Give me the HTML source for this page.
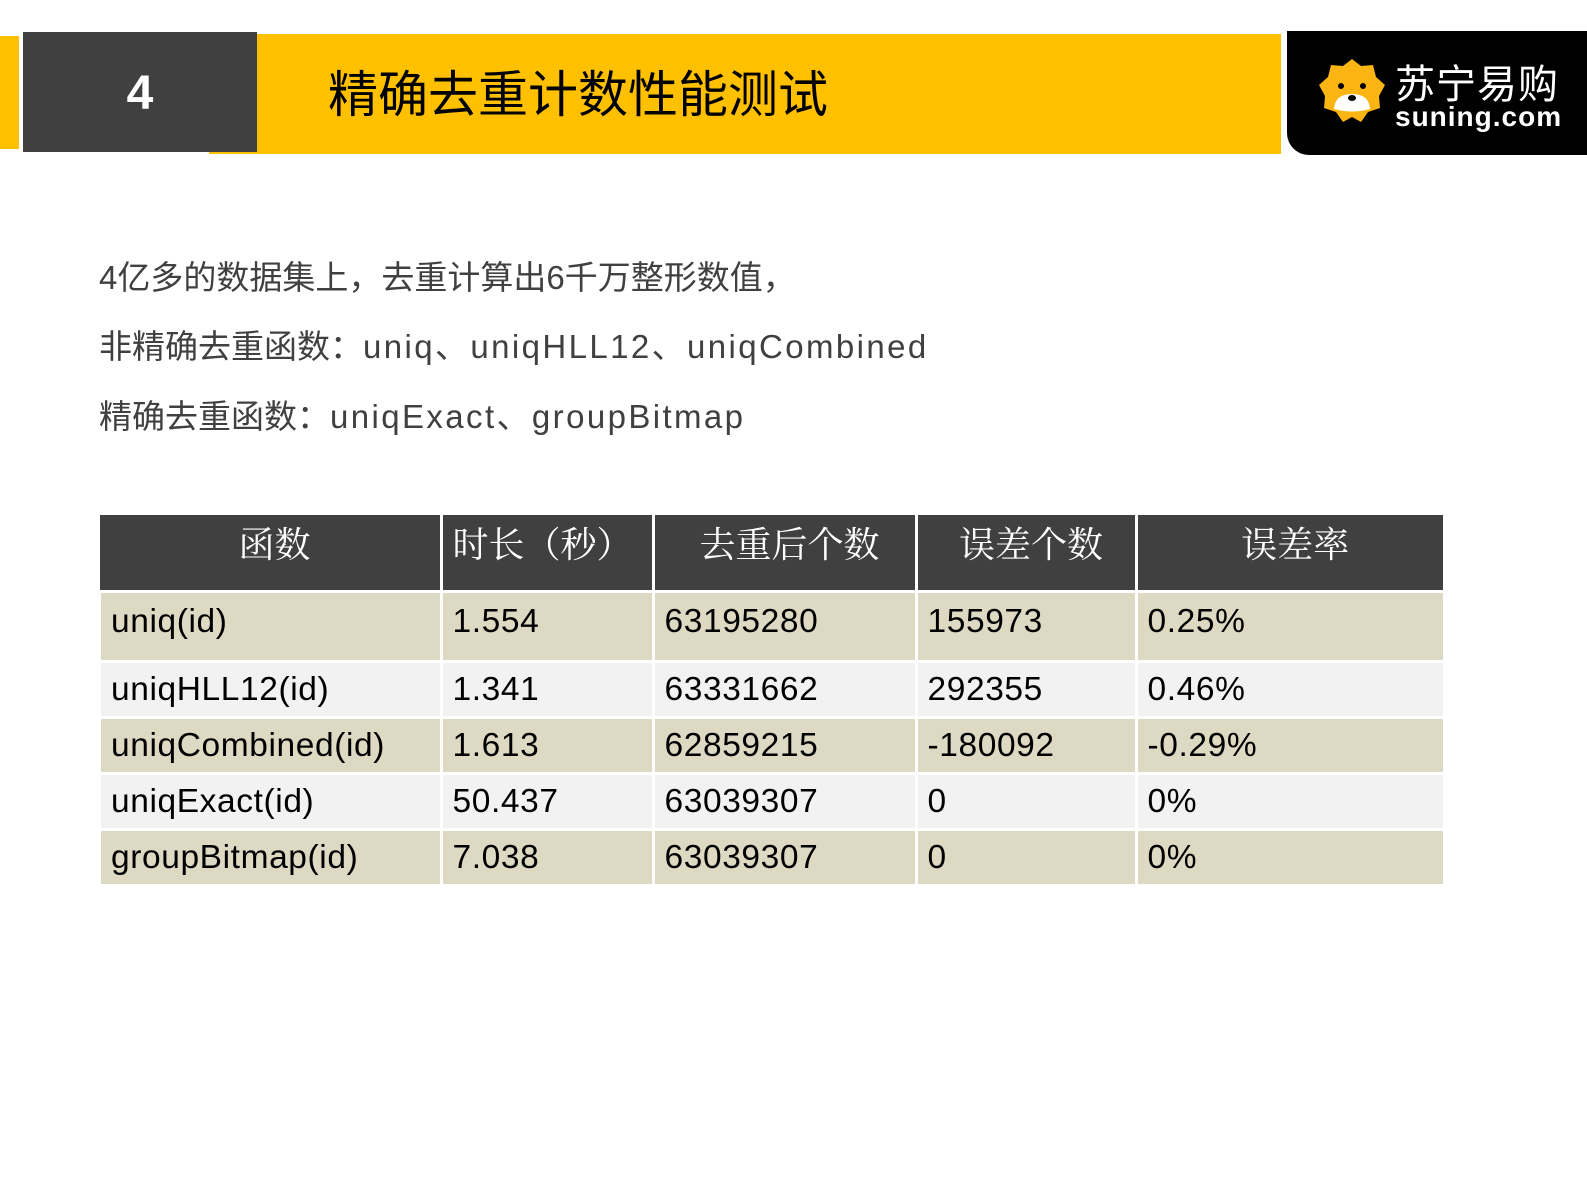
<!DOCTYPE html>
<html><head><meta charset="utf-8"><style>
body{margin:0;width:1587px;height:1190px;background:#fff;position:relative;overflow:hidden;font-family:"Liberation Sans","Noto Sans CJK SC",sans-serif}
.a{position:absolute}
.t{font-size:33px;color:#404040;left:99px;white-space:nowrap}
.t span{letter-spacing:2.4px}
table{position:absolute;left:98px;top:515px;border-collapse:collapse;width:1348px;font-size:33.5px;table-layout:fixed}
td,th{border:3px solid #fff;padding:0 0 0 10px;text-align:left;font-weight:normal;letter-spacing:0.6px;white-space:nowrap}
th{background:#404040;color:#fff;text-align:center;height:73px;font-family:"Noto Serif CJK SC",serif;font-size:36px;vertical-align:top;padding-top:2px;border-top:none;border-left:none;letter-spacing:0}
td{color:#000;border-left:3px solid #fff}
tr.o td{background:#DDD9C3}tr.e td{background:#F2F2F2}
</style></head><body>
<div class="a" style="left:0;top:36px;width:19px;height:113px;background:#FFC000"></div>
<div class="a" style="left:209px;top:34px;width:1072px;height:120px;background:#FFC000"></div>
<div class="a" style="left:23px;top:32px;width:234px;height:120px;background:#404040;color:#fff;font-weight:bold;font-size:48px;line-height:124px;text-align:center">4</div>
<div class="a" style="left:328px;top:62px;font-size:50px;color:#000;line-height:66px">精确去重计数性能测试</div>
<div class="a" style="left:1287px;top:31px;width:300px;height:124px;background:#000;border-bottom-left-radius:22px"></div>
<svg class="a" style="left:1317px;top:57px" width="70" height="70" viewBox="0 0 70 70">
<polygon points="35,2 44,9 56,8 59,20 68,28 62,39 63,51 51,55 44,65 35,60 26,65 19,55 7,51 8,39 2,28 11,20 14,8 26,9" fill="#FAB512"/>
<circle cx="24" cy="29" r="3" fill="#000"/><circle cx="46" cy="29" r="3" fill="#000"/>
<path d="M17 52 Q18 37 35 37 Q52 37 53 52 Q35 57 17 52Z" fill="#fff"/>
<ellipse cx="35" cy="41" rx="4" ry="3" fill="#000"/>
</svg>
<div class="a" style="left:1395px;top:63px;color:#fff;font-size:40px;line-height:44px;letter-spacing:1px">苏宁易购</div>
<div class="a" style="left:1395px;top:102px;color:#fff;font-size:28px;line-height:30px;letter-spacing:1px;font-weight:bold">suning.com</div>
<div class="a t" style="top:251px">4亿多的数据集上，去重计算出6千万整形数值，</div>
<div class="a t" style="top:320px">非精确去重函数：<span>uniq、uniqHLL12、uniqCombined</span></div>
<div class="a t" style="top:390px">精确去重函数：<span>uniqExact、groupBitmap</span></div>
<table>
<tr><th style="width:330px">函数</th><th style="width:199px;text-align:left">时长（秒）</th><th style="width:250px">去重后个数</th><th style="width:207px">误差个数</th><th>误差率</th></tr>
<tr class="o" style="height:70px"><td style="vertical-align:top;padding-top:10px">uniq(id)</td><td style="vertical-align:top;padding-top:10px">1.554</td><td style="vertical-align:top;padding-top:10px">63195280</td><td style="vertical-align:top;padding-top:10px">155973</td><td style="vertical-align:top;padding-top:10px">0.25%</td></tr>
<tr class="e" style="height:56px"><td>uniqHLL12(id)</td><td>1.341</td><td>63331662</td><td>292355</td><td>0.46%</td></tr>
<tr class="o" style="height:56px"><td>uniqCombined(id)</td><td>1.613</td><td>62859215</td><td>-180092</td><td>-0.29%</td></tr>
<tr class="e" style="height:56px"><td>uniqExact(id)</td><td>50.437</td><td>63039307</td><td>0</td><td>0%</td></tr>
<tr class="o" style="height:56px"><td>groupBitmap(id)</td><td>7.038</td><td>63039307</td><td>0</td><td>0%</td></tr>
</table>
</body></html>
